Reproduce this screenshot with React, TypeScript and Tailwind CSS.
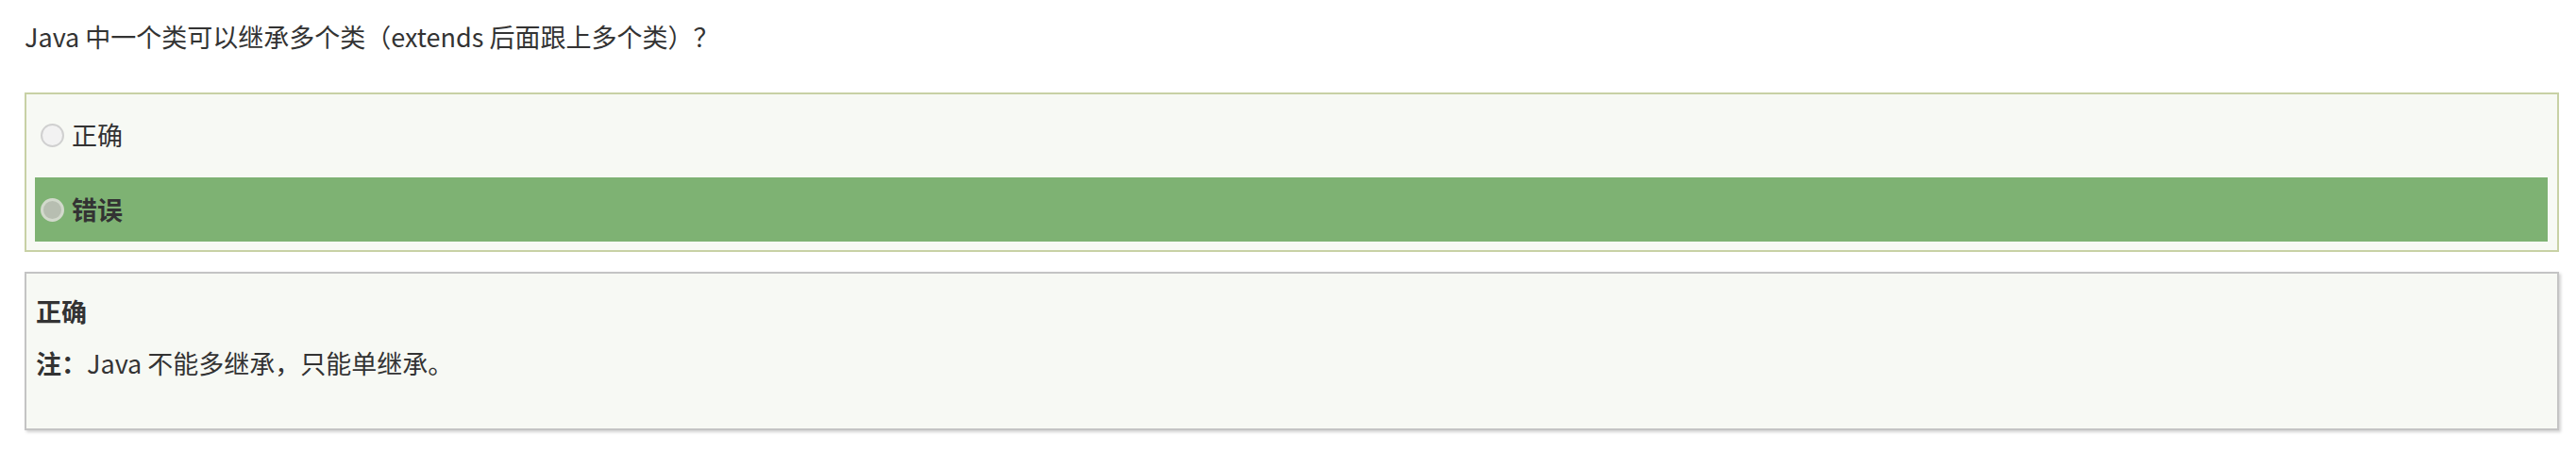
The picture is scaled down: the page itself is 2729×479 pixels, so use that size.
export default function App() {
  return (
    <div
      className="min-h-screen bg-white text-[#333] pr-[18px] pl-[26px]"
      style={{ fontFamily: '"Noto Sans CJK SC", "Noto Sans", sans-serif' }}
    >
      <div className="pt-[19px] text-[27px] leading-[40px]">
        Java 中一个类可以继承多个类（extends 后面跟上多个类）？
      </div>

      <div className="mt-[39px] border-2 border-[#c8d1a5] bg-[#f7f9f4] pt-[9px] pb-[9px] pl-[9px] pr-[10px] flex flex-col gap-[11px]">
        <div className="h-[68px] flex items-center pl-[6px] text-[27px]">
          <span className="w-[25px] h-[25px] rounded-full border-2 border-[#d0d0d0] bg-[#f2f2f2] shrink-0" />
          <span className="ml-[8px]">正确</span>
        </div>
        <div className="h-[68px] flex items-center pl-[6px] text-[27px] bg-[#7eb273] font-bold">
          <span className="w-[25px] h-[25px] rounded-full border-[3px] border-[#d2d9cc] bg-[#b7beb1] shrink-0" />
          <span className="ml-[8px]">错误</span>
        </div>
      </div>

      <div className="mt-[21px] border-2 border-[#c4c4c4] bg-[#f7f9f4] shadow-[2px_2px_3px_rgba(0,0,0,0.18)] pt-[20px] pb-[49px] pl-[10px] text-[27px] leading-[40px]">
        <div className="font-bold">正确</div>
        <div className="mt-[15px]">
          <span className="font-bold">注：</span>Java 不能多继承，只能单继承。
        </div>
      </div>
    </div>
  )
}
